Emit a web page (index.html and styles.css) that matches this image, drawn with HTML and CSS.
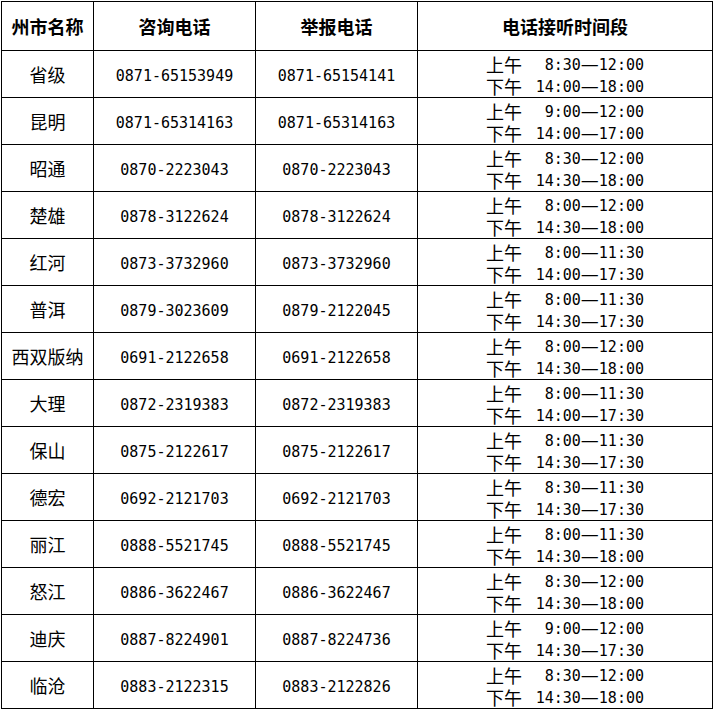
FILE: index.html
```html
<!DOCTYPE html>
<html lang="zh-CN">
<head>
<meta charset="utf-8">
<title>电话接听时间段</title>
<link rel="stylesheet" href="styles.css">
</head>
<body>
<table class="tbl">
  <colgroup>
    <col class="c1"><col class="c2"><col class="c3"><col class="c4">
  </colgroup>
  <thead>
    <tr class="head">
      <th>州市名称</th><th>咨询电话</th><th>举报电话</th><th>电话接听时间段</th>
    </tr>
  </thead>
  <tbody>
    <tr><td class="name">省级</td><td class="num">0871-65153949</td><td class="num">0871-65154141</td><td class="tm"><div class="times"><span class="lb">上午</span><span class="t">8:30<span class="d">—</span>12:00</span><span class="lb">下午</span><span class="t">14:00<span class="d">—</span>18:00</span></div></td></tr>
    <tr><td class="name">昆明</td><td class="num">0871-65314163</td><td class="num">0871-65314163</td><td class="tm"><div class="times"><span class="lb">上午</span><span class="t">9:00<span class="d">—</span>12:00</span><span class="lb">下午</span><span class="t">14:00<span class="d">—</span>17:00</span></div></td></tr>
    <tr><td class="name">昭通</td><td class="num">0870-2223043</td><td class="num">0870-2223043</td><td class="tm"><div class="times"><span class="lb">上午</span><span class="t">8:30<span class="d">—</span>12:00</span><span class="lb">下午</span><span class="t">14:30<span class="d">—</span>18:00</span></div></td></tr>
    <tr><td class="name">楚雄</td><td class="num">0878-3122624</td><td class="num">0878-3122624</td><td class="tm"><div class="times"><span class="lb">上午</span><span class="t">8:00<span class="d">—</span>12:00</span><span class="lb">下午</span><span class="t">14:30<span class="d">—</span>18:00</span></div></td></tr>
    <tr><td class="name">红河</td><td class="num">0873-3732960</td><td class="num">0873-3732960</td><td class="tm"><div class="times"><span class="lb">上午</span><span class="t">8:00<span class="d">—</span>11:30</span><span class="lb">下午</span><span class="t">14:00<span class="d">—</span>17:30</span></div></td></tr>
    <tr><td class="name">普洱</td><td class="num">0879-3023609</td><td class="num">0879-2122045</td><td class="tm"><div class="times"><span class="lb">上午</span><span class="t">8:00<span class="d">—</span>11:30</span><span class="lb">下午</span><span class="t">14:30<span class="d">—</span>17:30</span></div></td></tr>
    <tr><td class="name">西双版纳</td><td class="num">0691-2122658</td><td class="num">0691-2122658</td><td class="tm"><div class="times"><span class="lb">上午</span><span class="t">8:00<span class="d">—</span>12:00</span><span class="lb">下午</span><span class="t">14:30<span class="d">—</span>18:00</span></div></td></tr>
    <tr><td class="name">大理</td><td class="num">0872-2319383</td><td class="num">0872-2319383</td><td class="tm"><div class="times"><span class="lb">上午</span><span class="t">8:00<span class="d">—</span>11:30</span><span class="lb">下午</span><span class="t">14:00<span class="d">—</span>17:30</span></div></td></tr>
    <tr><td class="name">保山</td><td class="num">0875-2122617</td><td class="num">0875-2122617</td><td class="tm"><div class="times"><span class="lb">上午</span><span class="t">8:00<span class="d">—</span>11:30</span><span class="lb">下午</span><span class="t">14:30<span class="d">—</span>17:30</span></div></td></tr>
    <tr><td class="name">德宏</td><td class="num">0692-2121703</td><td class="num">0692-2121703</td><td class="tm"><div class="times"><span class="lb">上午</span><span class="t">8:30<span class="d">—</span>11:30</span><span class="lb">下午</span><span class="t">14:30<span class="d">—</span>17:30</span></div></td></tr>
    <tr><td class="name">丽江</td><td class="num">0888-5521745</td><td class="num">0888-5521745</td><td class="tm"><div class="times"><span class="lb">上午</span><span class="t">8:00<span class="d">—</span>11:30</span><span class="lb">下午</span><span class="t">14:30<span class="d">—</span>18:00</span></div></td></tr>
    <tr><td class="name">怒江</td><td class="num">0886-3622467</td><td class="num">0886-3622467</td><td class="tm"><div class="times"><span class="lb">上午</span><span class="t">8:30<span class="d">—</span>12:00</span><span class="lb">下午</span><span class="t">14:30<span class="d">—</span>18:00</span></div></td></tr>
    <tr><td class="name">迪庆</td><td class="num">0887-8224901</td><td class="num">0887-8224736</td><td class="tm"><div class="times"><span class="lb">上午</span><span class="t">9:00<span class="d">—</span>12:00</span><span class="lb">下午</span><span class="t">14:30<span class="d">—</span>17:30</span></div></td></tr>
    <tr><td class="name">临沧</td><td class="num">0883-2122315</td><td class="num">0883-2122826</td><td class="tm"><div class="times"><span class="lb">上午</span><span class="t">8:30<span class="d">—</span>12:00</span><span class="lb">下午</span><span class="t">14:30<span class="d">—</span>18:00</span></div></td></tr>
  </tbody>
</table>
</body>
</html>
```

FILE: styles.css
```css
html, body {
  margin: 0;
  padding: 0;
  background: #ffffff;
}
body {
  padding: 1px 0 0 1px;
  font-family: "Noto Sans CJK SC", "Noto Sans", sans-serif;
  color: #000000;
}
.tbl {
  border-collapse: collapse;
  table-layout: fixed;
  width: 711px;
}
.c1 { width: 92px; }
.c2 { width: 162px; }
.c3 { width: 162px; }
.c4 { width: 295px; }
.tbl th,
.tbl td {
  border: 1px solid #000000;
  padding: 0;
  text-align: center;
  vertical-align: middle;
}
.head th {
  height: 48px;
  font-size: 18px;
  font-weight: 700;
  line-height: 20px;
}
.tbl td {
  height: 46px;
}
.tbl td.num {
  height: 42px;
  padding-top: 4px;
}
.tbl td.tm {
  height: 44px;
  padding-top: 2px;
  vertical-align: top;
}
.name {
  font-size: 18px;
  line-height: 20px;
  font-weight: 400;
}
.num {
  font-family: "DejaVu Sans Mono", "Liberation Mono", monospace;
  font-size: 15px;
  line-height: 20px;
}
.times {
  display: grid;
  grid-template-columns: 36px 122px;
  grid-auto-rows: 22px;
  justify-content: center;
  align-items: center;
}
.lb {
  font-size: 18px;
  line-height: 22px;
  text-align: left;
}
.t {
  font-family: "DejaVu Sans Mono", "Liberation Mono", monospace;
  font-size: 15px;
  line-height: 22px;
  text-align: right;
}
.d {
  display: inline-block;
  width: 18px;
  font-family: "DejaVu Sans", sans-serif;
  font-size: 18px;
  text-align: center;
  line-height: 22px;
}
```
